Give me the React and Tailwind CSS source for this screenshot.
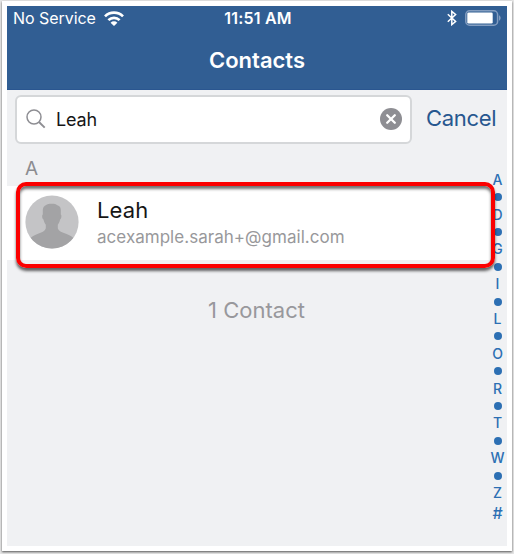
import React, { useState } from "react";

// Letters of the side index, a dot stands for the skipped ones
const INDEX = ["A", "•", "D", "•", "G", "•", "I", "•", "L", "•", "O", "•", "R", "•", "T", "•", "W", "•", "Z"];

const CONTACTS = [{ name: "Leah", email: "acexample.sarah+@gmail.com" }];

const WifiIcon = () => (
  <svg width="20" height="15" viewBox="0 0 20 15" fill="none" stroke="white" strokeWidth="2.7">
    <path d="M1 5.400a12.800 12.800 0 0 1 18 0" />
    <path d="M4.400 9.100a8 8 0 0 1 11.200 0" />
    <path d="M10 15 6.600 11.700a4.800 4.800 0 0 1 6.800 0Z" fill="white" stroke="none" />
  </svg>
);

const BluetoothIcon = () => (
  <svg width="10" height="16" viewBox="0 0 10 16" fill="none" stroke="white" strokeWidth="1.5">
    <path d="M0.800 4.300 8.600 11.500 4.800 14.600V1.400L8.600 4.500 0.800 11.700" />
  </svg>
);

const BatteryIcon = () => (
  <svg width="36" height="16" viewBox="0 0 36 16">
    <rect x="0.8" y="0.8" width="31.8" height="14.4" rx="3.8" fill="none" stroke="#839dc0" strokeWidth="1.5" />
    <rect x="2.3" y="2.4" width="25.4" height="11.2" rx="1.4" fill="white" />
    <path d="M34 5.300c2.200 1 2.200 4.400 0 5.400Z" fill="#839dc0" />
  </svg>
);

const SearchIcon = () => (
  <svg width="20" height="20" viewBox="0 0 20 20" fill="none" stroke="#8e8e93" strokeWidth="1.5">
    <circle cx="8" cy="8" r="7" />
    <path d="m13 13 5.700 5.700" strokeWidth="1.9" />
  </svg>
);

const ClearIcon = () => (
  <svg width="22" height="22" viewBox="0 0 22 22">
    <circle cx="11" cy="11" r="11" fill="#8e8e93" />
    <path d="m7.200 7.200 7.600 7.600m0-7.600-7.600 7.600" stroke="white" strokeWidth="2.3" strokeLinecap="round" />
  </svg>
);

const Avatar = () => (
  <svg width="54" height="54" viewBox="0 0 54 54" className="shrink-0">
    <defs>
      <clipPath id="avatar">
        <circle cx="27" cy="27" r="26.6" />
      </clipPath>
    </defs>
    <g clipPath="url(#avatar)">
      <rect width="54" height="54" fill="#c4c4c6" />
      <path
        d="M27 8.800c-3.500-.3-9 1.200-9.200 6.200v4.600c-1 .2-.8 4.400.7 5 .5 2.500 1.300 4 2.300 5.200v3.400c-.9 3-4.300 4.300-7.800 5.600C9 40.300 6 42 4.200 44.500V54h45.600v-9.500C48 42 45 40.300 41 38.800c-3.500-1.300-7.300-2.600-8.200-5.600v-3.400c1-1.200 1.800-2.700 2.300-5.200 1.500-.6 1.700-4.800.7-5V15c-.2-3.500-2-4.200-3-4.500-1.400-1.300-3.800-1.700-5.800-1.700Z"
        fill="#a3a3a5"
      />
    </g>
  </svg>
);

const App = () => {
  const [query, setQuery] = useState("Leah");

  return (
    <div className="h-[554px] w-[514px] overflow-hidden bg-[#e6e6e6] pl-[2px] pt-px font-['Inter','Liberation_Sans',sans-serif]">
      <div className="h-[550px] w-[510px] bg-white px-[5px] pt-[5px] pb-[5px] shadow-[0_1px_2px_0_#555]">
        <div className="relative flex h-[540px] w-[500px] flex-col bg-[#f0f1f3]">
          {/* Status bar and title */}
          <header className="h-[84px] shrink-0 border-b border-[#2a5690] bg-[#315e93] text-white">
            <div className="grid h-6 grid-cols-[1fr_auto_1fr] items-center pl-[6px] pr-[6px] text-[16px]">
              <div className="flex items-center gap-[8px]">
                <span className="tracking-[-0.05px]">No Service</span>
                <WifiIcon />
              </div>
              <span className="pl-[2px] font-semibold tracking-[0.2px]">11:51 AM</span>
              <div className="flex items-center justify-end gap-[8px]">
                <BluetoothIcon />
                <BatteryIcon />
              </div>
            </div>
            <h1 className="mt-[14px] text-center text-[22px] leading-8 font-semibold">Contacts</h1>
          </header>

          {/* Search */}
          <div className="flex h-[58px] shrink-0 items-center pl-[8px]">
            <div className="flex h-[49px] w-[397px] shrink-0 items-center rounded-[6px] border-2 border-[#d5d7d9] bg-white pl-[9px] pr-[8px]">
              <SearchIcon />
              <input
                value={query}
                onChange={(e) => setQuery(e.target.value)}
                className="ml-[10px] min-w-0 flex-1 bg-transparent text-[18px] tracking-[-0.15px] text-[#161616] outline-none"
              />
              <button type="button" onClick={() => setQuery("")}>
                <ClearIcon />
              </button>
            </div>
            <button type="button" className="ml-[14px] pb-px text-[22px] tracking-[-0.3px] text-[#27578f]">Cancel</button>
          </div>

          {/* Results */}
          <h2 className="h-[38px] shrink-0 pl-[18px] pt-[7px] text-[19px] leading-[28px] text-[#8c8c90]">A</h2>
          {CONTACTS.map((c) => (
            <div key={c.email} className="mr-[14px] flex h-[74px] shrink-0 items-start bg-white pl-[18px] pt-[9px]">
              <Avatar />
              <div className="ml-[18px]">
                <p className="text-[22px] leading-[30px] tracking-[0.1px] text-[#161616]">{c.name}</p>
                <p className="pt-px text-[17px] leading-[23px] tracking-[0.03px] text-[#98989b]">{c.email}</p>
              </div>
            </div>
          ))}
          <p className="mt-[34px] pr-px text-center text-[22px] leading-[32px] text-[#98989c]">1 Contact</p>

          {/* Side index */}
          <nav className="absolute right-0 top-[165px] flex w-[19px] flex-col items-center text-[14px] font-medium text-[#2c6fb3]">
            {INDEX.map((l, i) => (
              <span key={i} className="flex h-[17.42px] items-center leading-none">
                {l === "•" ? <span className="size-[8px] rounded-full bg-[#2c6fb3]" /> : l}
              </span>
            ))}
            <span className="mt-[3px] flex h-[17px] items-center text-[16px] leading-none">#</span>
          </nav>

          {/* Highlight around the matching row */}
          <div className="pointer-events-none absolute left-[9px] top-[176px] h-[86px] w-[479px] rounded-[10px] border-4 border-[#fb0000] shadow-[0_3px_3px_rgba(0,0,0,0.6),inset_0_3px_3px_rgba(0,0,0,0.55)]" />
        </div>
      </div>
    </div>
  );
};

export default App;
